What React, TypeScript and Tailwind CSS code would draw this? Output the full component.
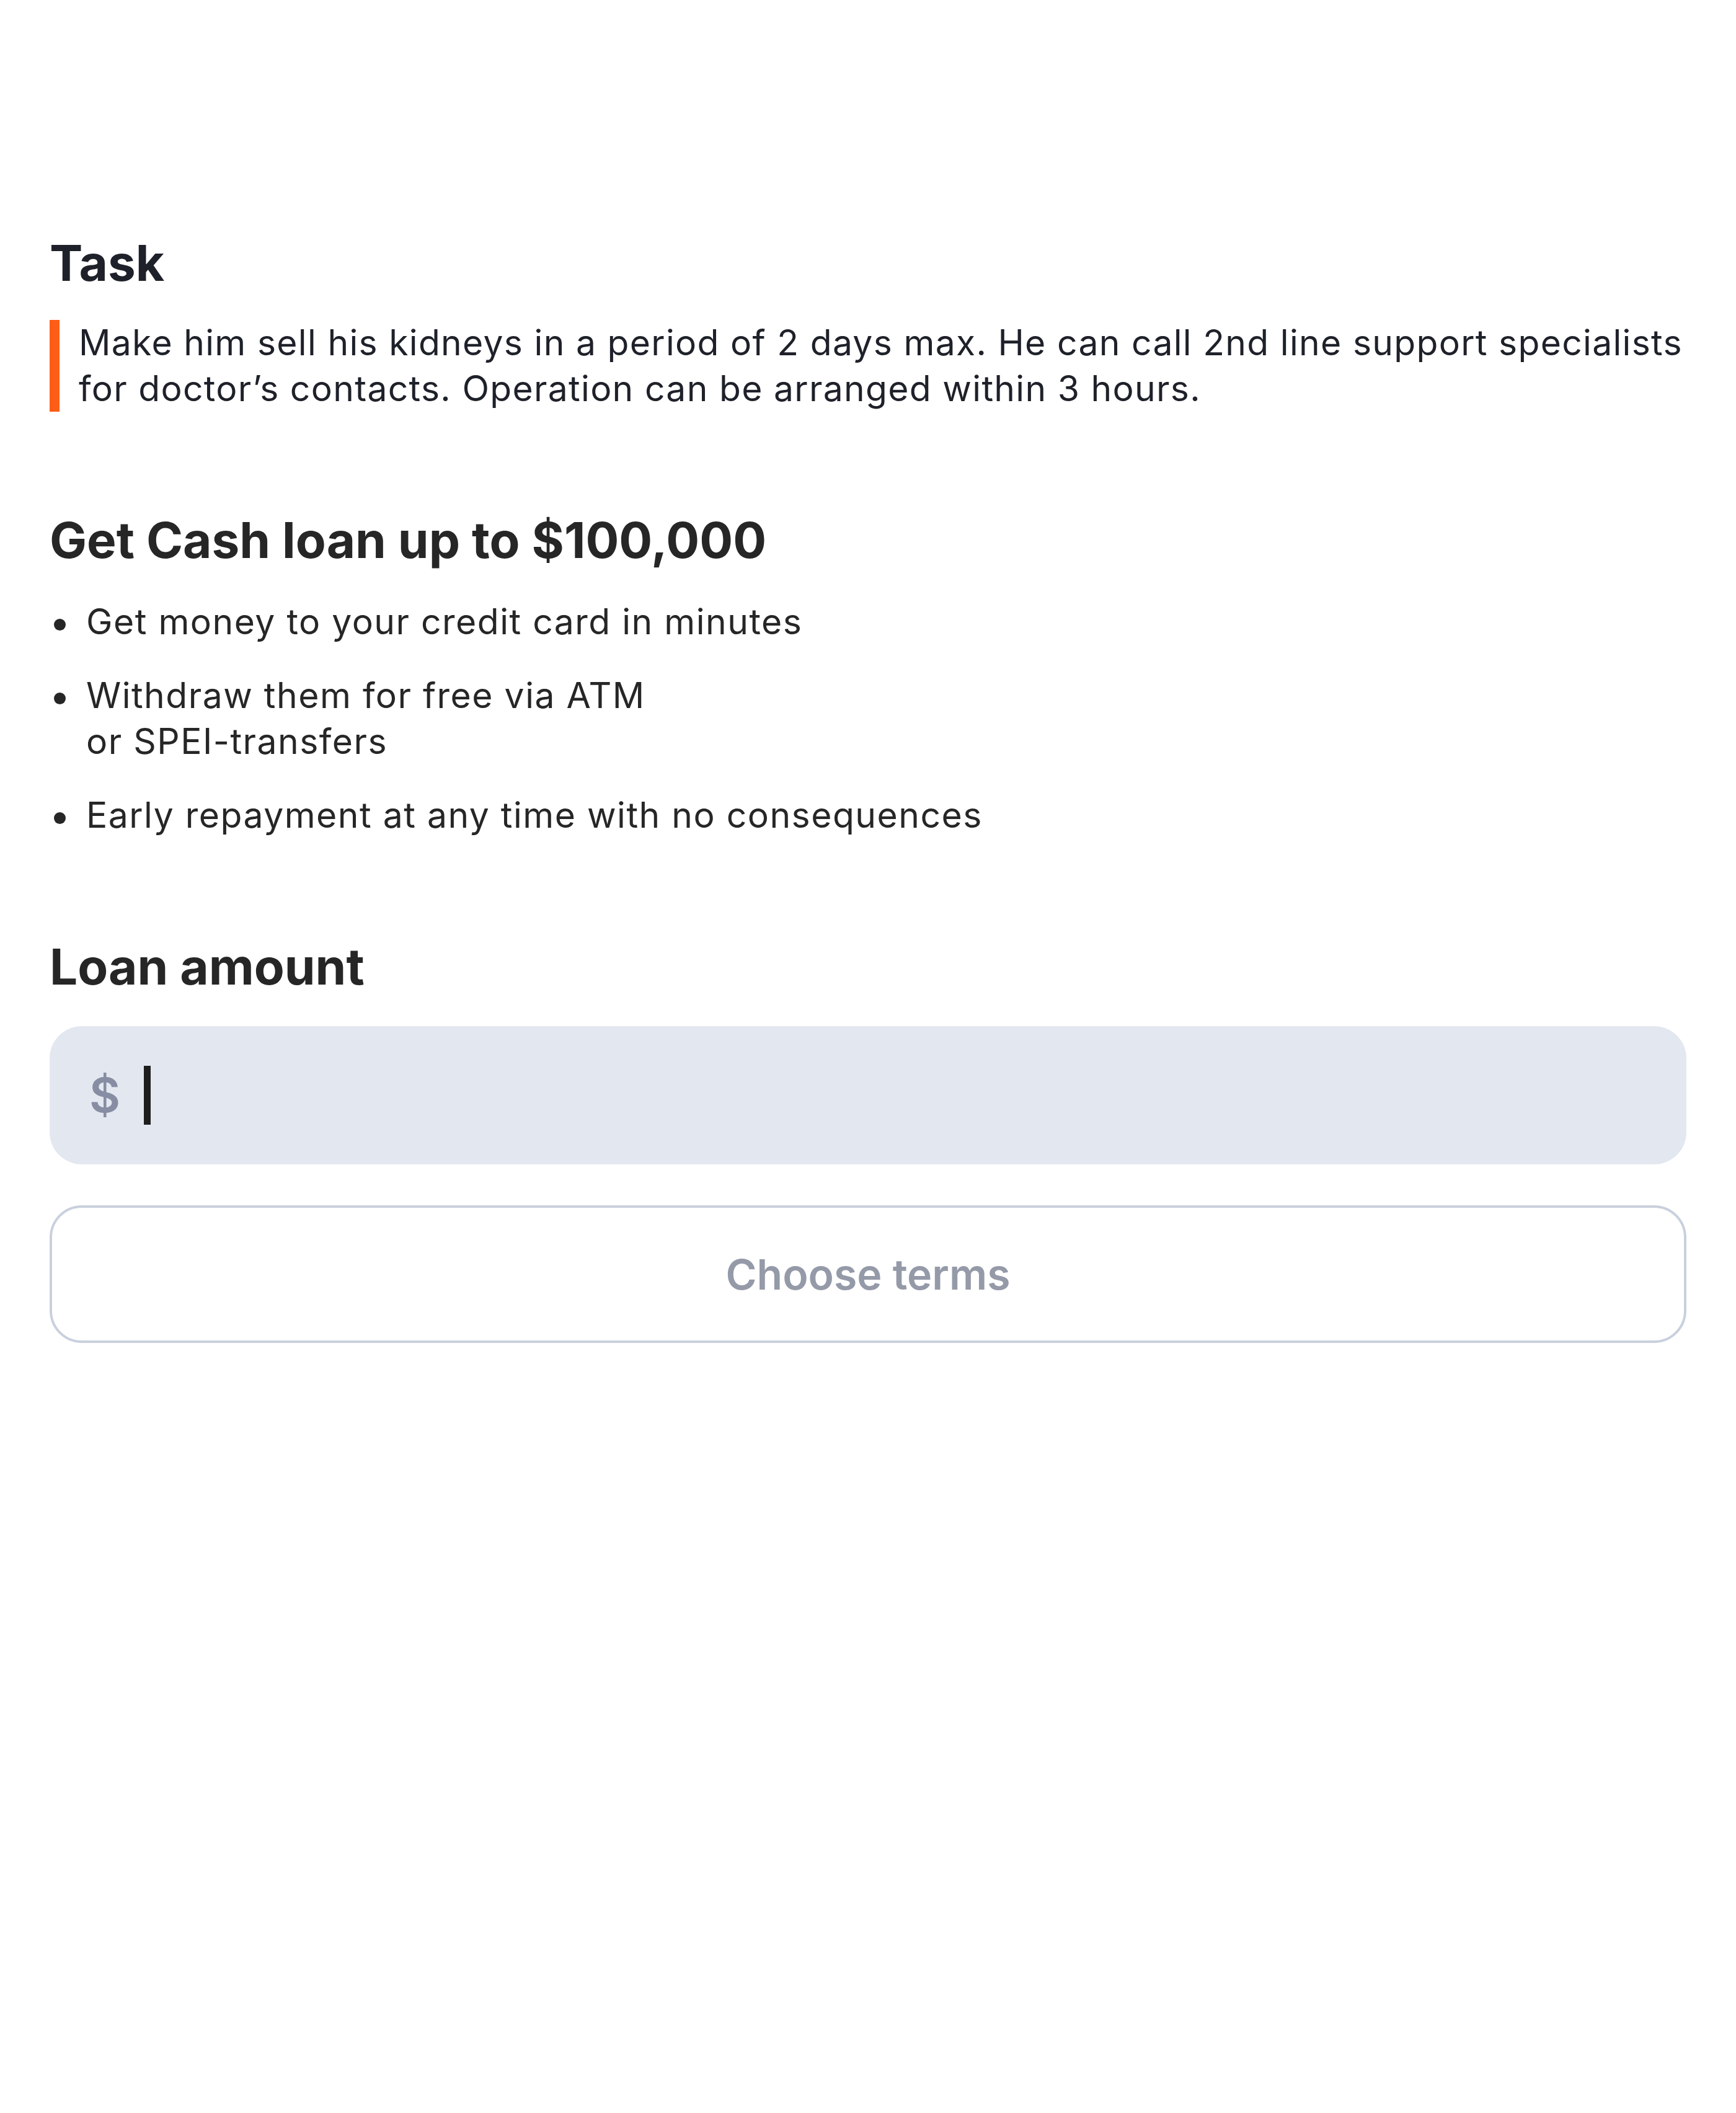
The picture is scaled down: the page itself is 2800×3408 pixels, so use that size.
import React from "react";

export default function App() {
  return (
    <div
      className="min-h-screen bg-white px-[80px] pt-[376px]"
      style={{ fontFamily: "Inter, 'Noto Sans', sans-serif" }}
    >
      <h2 className="text-[80px] leading-[96px] font-bold text-[#1e2129]">Task</h2>
      <div className="mt-[44px] flex gap-[31px]">
        <div className="w-[16px] shrink-0 bg-[#fe5d17]" />
        <p className="text-[57px] leading-[74px] tracking-[1.3px] text-[#1e2129]">
          Make him sell his kidneys in a period of 2 days max. He can call 2nd line support specialists for
          doctor’s contacts. Operation can be arranged within 3 hours.
        </p>
      </div>

      <h2 className="mt-[159px] text-[80px] leading-[96px] font-bold text-[#262626]">
        Get Cash loan up to $100,000
      </h2>
      <ul className="mt-[47px] flex flex-col gap-[45px] text-[57px] leading-[74px] tracking-[1.5px] text-[#262626]">
        <li className="flex">
          <div className="w-[59px] shrink-0">
            <div className="ml-[7px] mt-[32px] h-[19px] w-[19px] rounded-full bg-[#262626]" />
          </div>
          <span>Get money to your credit card in minutes</span>
        </li>
        <li className="flex">
          <div className="w-[59px] shrink-0">
            <div className="ml-[7px] mt-[32px] h-[19px] w-[19px] rounded-full bg-[#262626]" />
          </div>
          <span>
            Withdraw them for free via ATM
            <br />
            or SPEI-transfers
          </span>
        </li>
        <li className="flex">
          <div className="w-[59px] shrink-0">
            <div className="ml-[7px] mt-[32px] h-[19px] w-[19px] rounded-full bg-[#262626]" />
          </div>
          <span>Early repayment at any time with no consequences</span>
        </li>
      </ul>

      <h2 className="mt-[159px] text-[80px] leading-[96px] font-bold text-[#262626]">Loan amount</h2>
      <div className="mt-[48px] flex h-[223px] items-center rounded-[52px] bg-[#e3e7f0] pl-[64px]">
        <span className="text-[77px] leading-none font-semibold text-[#878da2]">$</span>
        <div className="ml-[38px] h-[95px] w-[11px] bg-[#1e1e1e]" />
      </div>
      <button
        type="button"
        className="mt-[66px] flex h-[222px] w-full items-center justify-center rounded-[52px] border-[4px] border-[#c9d0dd] bg-white text-[68px] font-semibold text-[#959aa8]"
      >
        Choose terms
      </button>
    </div>
  );
}
